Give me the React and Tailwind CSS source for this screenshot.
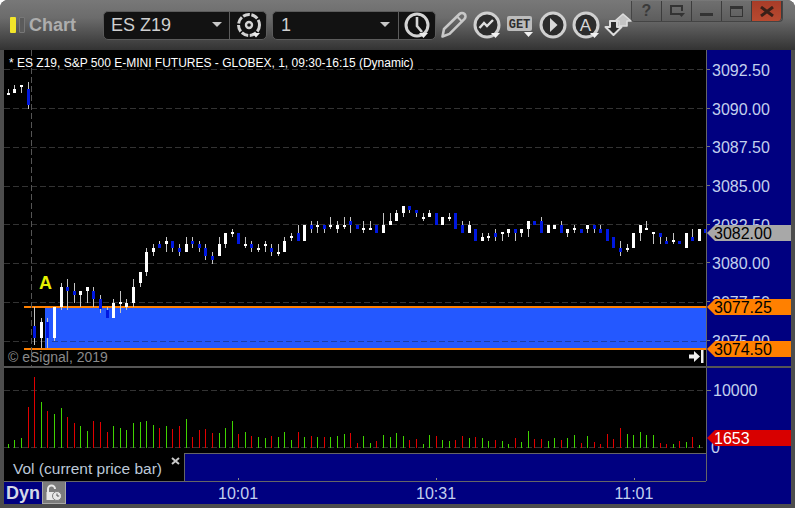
import React from "react";

const W = "#ffffff", B = "#0018e0";
// x, wickTop, wickBottom, bodyTop, bodyBottom, colour
const candles = [
  [8,89,95,93,95,W],[14,85,93,89,93,W],[21,85,93,85,87,W],[28,82,109,89,105,B],
  [34,307,345,326,338,B],[41,318,348,322,338,W],[47,318,348,322,338,B],[54,307,341,307,338,W],
  [61,283,310,287,307,W],[67,279,310,287,291,B],[74,283,303,291,295,B],[80,291,307,291,295,W],
  [87,287,303,287,291,W],[93,287,307,291,299,B],[100,295,313,299,309,B],[107,307,318,310,318,B],
  [113,299,318,303,318,W],[120,291,313,302,304,W],[126,299,310,303,307,W],[133,279,307,287,303,W],
  [140,272,287,272,283,W],[146,248,276,252,272,W],[153,244,256,248,252,W],[159,241,248,244,248,B],
  [166,237,252,241,244,W],[172,241,252,241,248,B],[179,244,256,248,252,B],[186,237,252,244,252,W],
  [192,237,248,241,244,B],[199,241,252,244,248,B],[205,244,260,248,256,B],[212,252,264,256,260,B],
  [219,237,256,244,256,W],[225,233,248,233,244,W],[232,229,237,232,234,W],[238,233,244,233,244,B],
  [245,237,248,244,246,W],[251,241,252,244,248,B],[258,244,252,248,250,W],[265,241,252,244,246,W],
  [271,244,256,248,252,B],[278,244,256,252,254,W],[284,237,252,241,252,W],[291,233,241,236,238,W],
  [298,225,241,233,241,B],[304,225,241,225,241,W],[311,221,233,225,229,B],[317,221,233,225,227,W],
  [324,225,233,225,229,B],[330,217,229,225,227,W],[337,221,233,225,229,W],[344,217,229,225,227,W],
  [350,217,233,221,225,B],[357,225,229,225,229,B],[363,221,233,228,230,W],[370,221,230,228,230,W],
  [376,225,233,225,233,B],[383,213,233,225,233,W],[390,213,225,221,225,W],[396,210,221,213,221,W],
  [403,206,217,206,213,W],[409,206,213,206,210,B],[416,210,217,210,213,B],[423,213,221,217,219,W],
  [429,210,217,213,217,W],[436,213,225,213,225,B],[442,217,225,217,225,W],[449,213,221,217,219,W],
  [455,213,229,213,229,B],[462,221,233,225,233,B],[469,221,233,225,233,W],[475,229,241,229,241,B],
  [482,233,241,237,241,W],[488,233,241,236,238,W],[495,229,241,233,237,B],[502,232,241,232,234,W],
  [508,229,237,229,233,W],[515,229,241,229,233,B],[521,229,237,229,233,W],[528,221,237,221,229,W],
  [534,221,225,221,225,B],[541,217,233,221,233,B],[548,225,233,225,233,W],[554,225,229,225,229,W],
  [561,221,233,225,233,B],[567,229,237,229,233,W],[574,225,233,228,230,W],[581,229,233,229,233,B],
  [587,225,233,225,229,W],[594,225,233,225,229,B],[600,225,233,229,233,B],[607,229,241,229,241,B],
  [613,237,248,237,248,B],[620,241,256,248,252,B],[627,244,252,248,250,W],[633,233,248,233,248,W],
  [640,225,241,225,233,W],[646,221,230,228,230,W],[653,232,244,232,234,W],[660,233,244,233,237,B],
  [666,237,244,241,244,B],[673,233,244,240,242,W],[679,241,244,241,244,B],[686,233,248,233,248,W],
  [692,229,241,237,241,B],[699,229,241,229,241,W],[705,229,233,229,233,B],
];

const G = "#3fd400", R = "#e00000";
const volumes = [
  [8,444,G],[14,440,G],[21,438,G],[28,407,R],[34,377,R],[41,402,G],[47,411,R],[54,414,G],[61,408,G],[67,417,R],
  [74,423,R],[80,426,G],[87,431,G],[93,421,R],[100,422,R],[107,432,R],[113,426,G],[120,428,G],[126,430,G],[133,423,G],
  [140,422,G],[146,421,G],[153,425,G],[159,428,R],[166,426,G],[172,429,R],[179,426,R],[186,419,G],[192,437,R],[199,430,R],
  [205,429,R],[212,433,R],[219,433,G],[225,428,G],[232,421,G],[238,434,R],[245,432,G],[251,436,R],[258,437,G],[265,438,G],
  [271,436,R],[278,437,G],[284,432,G],[291,440,G],[298,432,R],[304,437,G],[311,436,R],[317,437,G],[324,437,R],[330,437,G],
  [337,436,G],[344,434,G],[350,433,R],[357,443,R],[363,436,G],[370,443,G],[376,441,R],[383,435,G],[390,437,G],[396,433,G],
  [403,436,G],[409,440,R],[416,439,R],[423,444,G],[429,435,G],[436,436,R],[442,440,G],[449,441,G],[455,440,R],[462,436,R],
  [469,438,G],[475,437,R],[482,438,G],[488,441,G],[495,440,R],[502,441,G],[508,444,G],[515,438,R],[521,442,G],[528,431,G],
  [534,439,R],[541,439,R],[548,441,G],[554,438,G],[561,440,R],[567,438,G],[574,435,G],[581,443,R],[587,436,G],[594,442,R],
  [600,444,R],[607,434,R],[613,439,R],[620,428,R],[627,434,G],[633,435,G],[640,432,G],[646,435,G],[653,435,G],[660,443,R],
  [666,444,R],[673,444,G],[679,441,R],[686,442,G],[692,437,R],[699,445,G],
];

const grid = [69.5, 108.5, 147.5, 186.5, 224.5, 263.5, 302.5, 341.5];
const prices = ["3092.50","3090.00","3087.50","3085.00","3082.50","3080.00","3077.50","3075.00"];

function Caret({ x, y, w = 9, c = "#d8d8d8" }) {
  return <path d={`M${x} ${y}h${w}l${-w / 2} ${w * 0.55}z`} fill={c} />;
}

function PriceTag({ top, bg, fg, children }) {
  return (
    <div
      style={{ top }}
      className={`absolute left-0 w-[84px] h-[16px] pl-[7px] pt-[1px] text-[16px] leading-[16px] [clip-path:polygon(0_50%,8px_0,100%_0,100%_100%,8px_100%)] ${bg} ${fg}`}
    >
      {children}
    </div>
  );
}

function WinButton({ w, red, children }) {
  return (
    <div
      style={{ width: w }}
      className={`h-[20px] flex items-center justify-center border-r border-[#3c3c3c] ${
        red ? "bg-[linear-gradient(#a83c28,#b84a30)] rounded-br-[4px]" : "bg-[linear-gradient(#6f6f6f,#5d5d5d)]"
      }`}
    >
      {children}
    </div>
  );
}

function TimeLabel({ ml, children }) {
  return (
    <span style={{ marginLeft: ml }} className="relative w-[40px] text-center leading-none pt-[2px]">
      <span className="absolute left-1/2 top-[-6px] w-px h-[2px] bg-[#888]" />
      {children}
    </span>
  );
}

const ring = { fill: "#2c2c2c", stroke: "#d0d0d0", strokeWidth: 3 };

export default function App() {
  return (
    <div className="w-[795px] h-[508px] flex flex-col relative overflow-hidden rounded-t-[8px] bg-[#4a4a4a] font-['Liberation_Sans',Arial,sans-serif]">
      {/* title bar */}
      <div className="h-[50px] flex items-center pl-[10px] bg-[linear-gradient(#787878_0%,#6c6c6c_35%,#565656_60%,#333333_100%)]">
        <div className="w-[6px] h-[16px] bg-[#f2e52a] rounded-[1px]" />
        <div className="w-[6px] h-[16px] ml-[3px] bg-[#5b5b5b] border border-[#777] rounded-[1px]" />
        <div className="ml-[4px] w-[74px] text-[18px] font-bold text-[#adadad] leading-none">Chart</div>

        <div className="w-[164px] h-[29px] flex items-center bg-[#121212] border border-[#5c5c5c] rounded-[5px]">
          <div className="w-[126px] h-full flex items-center border-r border-[#5c5c5c] pl-[7px] pr-[7px] justify-between">
            <span className="text-[18px] leading-none text-[#cfcfcf]">ES Z19</span>
            <svg width="10" height="6"><path d="M0 0h10l-5 5z" fill="#c8c8c8" /></svg>
          </div>
          <svg width="36" height="27" viewBox="230 12 36 27" className="shrink-0">
            <circle cx="249" cy="25" r="10.5" fill="none" stroke="#d4d4d4" strokeWidth="3" strokeDasharray="7 1.6" />
            <circle cx="249" cy="25" r="3" fill="none" stroke="#d4d4d4" strokeWidth="2.4" />
            <Caret x={252} y={33} w={8} c="#eeeeee" />
          </svg>
        </div>

        <div className="ml-[5px] w-[164px] h-[29px] flex items-center bg-[#121212] border border-[#5c5c5c] rounded-[5px]">
          <div className="w-[126px] h-full flex items-center border-r border-[#5c5c5c] pl-[8px] pr-[8px] justify-between">
            <span className="text-[18px] leading-none text-[#cfcfcf]">1</span>
            <svg width="10" height="6"><path d="M0 0h10l-5 5z" fill="#c8c8c8" /></svg>
          </div>
          <svg width="36" height="27" viewBox="399 12 36 27" className="shrink-0">
            <circle cx="417" cy="25" r="11" fill="none" stroke="#d4d4d4" strokeWidth="3" />
            <path d="M417 17v9l5 6" fill="none" stroke="#d4d4d4" strokeWidth="2.6" />
            <Caret x={419} y={33} w={9} c="#eeeeee" />
          </svg>
        </div>

        {/* tool icons */}
        <svg width="198" height="50" viewBox="437 0 198 50" className="ml-[1px] shrink-0">
          <path d="M442.5 36.5l1.5-7.5 15.5-15c1.4-1.3 3.7-1.2 5 0 1.3 1.3 1.3 3.5 0 4.9l-15 15z" fill="none" stroke="#c8c8c8" strokeWidth="2.6" strokeLinejoin="round" />
          <path d="M457 16.5l5.5 5.5" stroke="#c8c8c8" strokeWidth="2" />
          <circle cx="487" cy="25" r="12" {...ring} />
          <path d="M479.5 28l4.5-5 3 3 6-6" fill="none" stroke="#e0e0e0" strokeWidth="2.4" />
          <Caret x={491} y={33} w={9} c="#f2f2f2" />
          <rect x="507" y="16" width="25" height="15" rx="2" fill="#bcbcbc" />
          <text x="519.5" y="28" textAnchor="middle" fontSize="12" fontWeight="700" fontFamily="'Liberation Mono',monospace" fill="#2e2e2e">GET</text>
          <Caret x={524} y={32} w={9} c="#f2f2f2" />
          <circle cx="553" cy="25" r="12" {...ring} />
          <path d="M550 18l7.5 7-7.5 7z" fill="#d8d8d8" />
          <circle cx="586" cy="25" r="12" {...ring} />
          <text x="585.5" y="31" textAnchor="middle" fontSize="17" fontFamily="'Liberation Sans',sans-serif" fill="#d8d8d8">A</text>
          <Caret x={590} y={33} w={9} c="#f2f2f2" />
          <path d="M623 14l8 7h-4v5h-8v-5h-4z" fill="#c4c4c4" stroke="#dcdcdc" strokeWidth="1.6" strokeLinejoin="round" />
          <path d="M610 21h7v6h4.5l-8 8-8-8h4.5z" fill="#2c2c2c" stroke="#dcdcdc" strokeWidth="2" strokeLinejoin="round" />
        </svg>
      </div>

      {/* window buttons */}
      <div className="absolute top-[1px] left-[631px] flex rounded-b-[4px] border border-t-0 border-[#444] overflow-hidden">
        <WinButton w={30}><span className="text-[16px] font-bold text-[#3a3a3a] leading-none">?</span></WinButton>
        <WinButton w={30}>
          <svg width="16" height="13"><path d="M11 9H2V1h11v5" fill="none" stroke="#333" strokeWidth="2" /><path d="M9 8h7l-3.5 4z" fill="#333" /></svg>
        </WinButton>
        <WinButton w={30}><div className="w-[13px] h-[3px] bg-[#333] mt-[6px]" /></WinButton>
        <WinButton w={30}>
          <div className="w-[13px] h-[11px] border border-t-[3px] border-[#333]" />
        </WinButton>
        <WinButton w={30} red>
          <svg width="14" height="11"><path d="M1 1l12 9M13 1L1 10" stroke="#3a2018" strokeWidth="3" /></svg>
        </WinButton>
      </div>

      {/* chart frame */}
      <div className="flex-1 flex flex-col border-x-4 border-b-4 border-[#4d4d4d] text-[16px] text-[#c3d0ee]">
        {/* price row */}
        <div className="h-[316px] flex">
          <div className="relative w-[702px] bg-black">
            <svg width="702" height="316" viewBox="4 50 702 316" shapeRendering="crispEdges" className="block">
              {grid.map((y) => (
                <line key={y} x1="4" x2="706" y1={y} y2={y} stroke="#333" strokeDasharray="6 3" />
              ))}
              <rect x="45" y="307" width="661" height="41" fill="#2458ff" />
              <rect x="24" y="306" width="682" height="2" fill="#ff8000" />
              <rect x="24" y="348" width="682" height="2" fill="#ff8000" />
              <line x1="52" x2="706" y1="341.5" y2="341.5" stroke="#1c3fa8" strokeDasharray="6 3" />
              <line x1="31.5" x2="31.5" y1="50" y2="366" stroke="#555" strokeDasharray="6 3" />
              {candles.map(([x, wt, wb, bt, bb, c]) => (
                <g key={x}>
                  <rect x={x} y={wt} width="1" height={wb - wt} fill="#c4c4c4" />
                  <rect x={x - 1} y={bt} width="3" height={bb - bt} fill={c} />
                </g>
              ))}
            </svg>
            <div className="absolute left-[5px] top-[6px] text-[12px] leading-[14px] text-white whitespace-nowrap">
              * ES Z19, S&amp;P 500 E-MINI FUTURES - GLOBEX, 1, 09:30-16:15 (Dynamic)
            </div>
            <div className="absolute left-[35px] top-[224px] text-[18px] leading-[18px] font-bold text-[#e6f000]">A</div>
            <div className="absolute left-[4px] top-[299px] text-[14px] leading-[16px] text-[#8a8a8a] whitespace-nowrap">© eSignal, 2019</div>
            <svg width="16" height="13" className="absolute left-[684px] top-[300px]">
              <path d="M1 4.5h5V1l6 5.5L6 12V8.5H1z" fill="#f0f0f0" />
              <rect x="13" y="0" width="2.5" height="13" fill="#f0f0f0" />
            </svg>
          </div>
          <div className="relative w-[85px] bg-[#000080] border-l border-[#666]">
            {prices.map((p) => (
              <div key={p} className="h-[38.7px] flex items-center leading-none">
                <div className="w-[3px] h-px bg-[#777] mr-[1px]" />
                <span className="pt-[3px] pl-px">{p}</span>
              </div>
            ))}
            <PriceTag top={175} bg="bg-[#a8a8a8]" fg="text-black">3082.00</PriceTag>
            <PriceTag top={249} bg="bg-[#ff8000]" fg="text-black">3077.25</PriceTag>
            <PriceTag top={291} bg="bg-[#ff8000]" fg="text-black">3074.50</PriceTag>
          </div>
        </div>

        <div className="h-[2px] bg-[#555]" />

        {/* volume row */}
        <div className="h-[85px] flex">
          <div className="w-[702px] bg-black">
            <svg width="702" height="85" viewBox="4 368 702 85" shapeRendering="crispEdges" className="block">
              <line x1="4" x2="706" y1="390.5" y2="390.5" stroke="#333" strokeDasharray="6 3" />
              <line x1="4" x2="706" y1="447.5" y2="447.5" stroke="#333" strokeDasharray="6 3" />
              {volumes.map(([x, top, c]) => (
                <rect key={x} x={x} y={top} width="1" height={448 - top} fill={c} />
              ))}
            </svg>
          </div>
          <div className="relative w-[85px] bg-[#000080] border-l border-[#666]">
            <div className="h-[44px] flex items-center leading-none">
              <div className="w-[4px] h-px bg-[#777] mr-[2px]" />
              <span className="pt-[2px]">10000</span>
            </div>
            <div className="mt-[24px] h-[24px] flex items-center leading-none pl-[4px]">0</div>
            <PriceTag top={62} bg="bg-[#d80000]" fg="text-white">1653</PriceTag>
          </div>
        </div>

        {/* legend row */}
        <div className="h-[28px] flex">
          <div className="w-[180px] bg-black relative flex items-center pl-[9px] text-[15.5px] text-[#bcc8d8] whitespace-nowrap leading-none pt-[4px]">
            Vol (current price bar)
            <svg width="9" height="8" className="absolute left-[167px] top-[4px]">
              <path d="M1 1l7 6M8 1L1 7" stroke="#c8c8c8" strokeWidth="2" />
            </svg>
          </div>
          <div className="w-[522px] bg-[#000080] border-l border-t border-[#666]" />
          <div className="w-[85px] bg-[#000080] border-l border-[#666]" />
        </div>

        {/* time row */}
        <div className="flex-1 flex items-center relative bg-[#000080]">
          <div className="absolute left-0 w-[702px] top-0 h-px bg-[#666]" />
          <span className="ml-[2px] w-[36px] text-[18px] font-bold text-[#d4d8e6] leading-none">Dyn</span>
          <div className="w-[24px] h-[23px] flex items-center justify-center bg-[#7c7c7c] border border-[#a8a8a8]">
            <svg width="18" height="18" viewBox="0 0 18 18">
              <path d="M3 9V5a3.5 3.5 0 0 1 7 0" fill="none" stroke="#e8e8e8" strokeWidth="2" />
              <rect x="1.5" y="8" width="8" height="8" fill="#e8e8e8" />
              <circle cx="12" cy="12" r="4.5" fill="#e8e8e8" stroke="#7c7c7c" />
              <path d="M12 9.5V12h2.2" fill="none" stroke="#555" strokeWidth="1" />
            </svg>
          </div>
          <TimeLabel ml={152}>10:01</TimeLabel>
          <TimeLabel ml={158}>10:31</TimeLabel>
          <TimeLabel ml={158}>11:01</TimeLabel>
        </div>
      </div>
    </div>
  );
}
